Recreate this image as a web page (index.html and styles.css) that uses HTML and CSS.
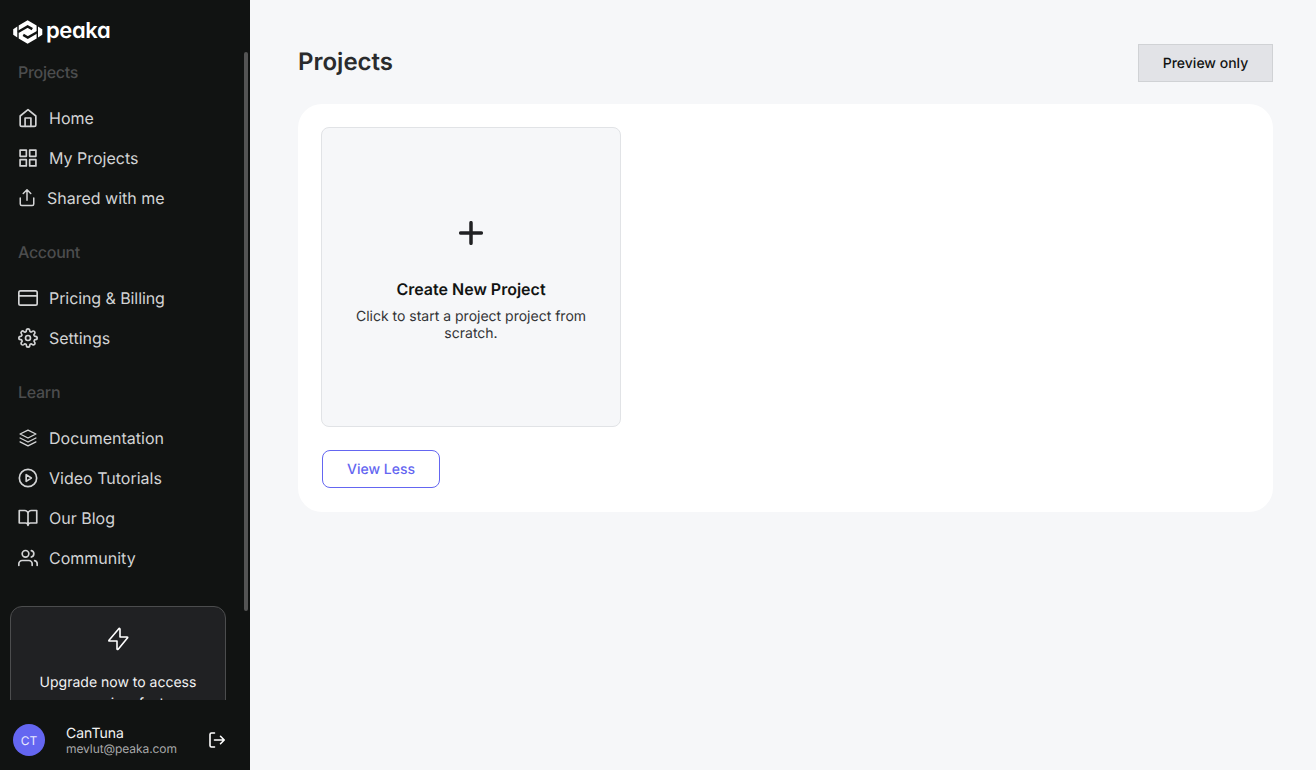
FILE: index.html
```html
<!DOCTYPE html>
<html lang="en">
<head>
<meta charset="utf-8">
<title>Peaka - Projects</title>
<link rel="stylesheet" href="styles.css">
</head>
<body>
<div class="app">
  <aside class="sidebar">
    <header class="brand">
      <svg class="brand-mark" width="30" height="24" viewBox="0 0 30 24">
        <path fill="#fff" d="M4.300 6.500V17.500L.2 14.800V9.200zM25 6.500V17.500L29.300 14.800V9.200zM14.600 .3L23.600 5.600V18.400L14.600 23.700L5.700 18.400V5.600z"/>
        <path stroke="#111312" stroke-width="2.500" d="M5 12L14.600 6.500L19.300 9.200M24.500 12L14.800 17.500L10.200 14.800"/>
      </svg>
      <span class="brand-name">peaka</span>
    </header>
    <div class="scroll">
      <nav class="menu">
        <h2 class="group">Projects</h2>
        <a class="item"><svg class="icon" viewBox="0 0 24 24"><path d="M2.600 9.600L12 2l9.400 7.600V20a2 2 0 0 1-2 2H4.600a2 2 0 0 1-2-2z"/><path d="M8.500 22V12h7v10"/></svg>Home</a>
        <a class="item"><svg class="icon" viewBox="0 0 24 24"><path d="M2.500 2.500h7.500v7.500H2.500zM14 2.500h7.500v7.500H14zM14 14h7.500v7.500H14zM2.500 14h7.500v7.500H2.500z"/></svg>My Projects</a>
        <a class="item"><svg class="icon icon-share" viewBox="0 0 24 24"><path d="M3 12v8a2 2 0 0 0 2 2h14a2 2 0 0 0 2-2v-8M17 6l-5-5-5 5M12 1v14"/></svg>Shared with me</a>
        <h2 class="group">Account</h2>
        <a class="item item-tight"><svg class="icon" viewBox="0 0 24 24"><rect x="1" y="3.500" width="22" height="17" rx="2"/><path d="M1 9.500h22"/></svg>Pricing &amp; Billing</a>
        <a class="item"><svg class="icon" viewBox="0 0 24 24"><circle cx="12" cy="12" r="3"/><path d="M19.400 15a1.650 1.650 0 0 0 .33 1.820l.06.06a2 2 0 1 1-2.830 2.830l-.06-.06a1.650 1.650 0 0 0-2.800 1.170V21a2 2 0 0 1-4 0v-.09A1.650 1.650 0 0 0 7.180 19.730l-.06.06a2 2 0 1 1-2.830-2.830l.06-.06A1.650 1.650 0 0 0 3.090 14H3a2 2 0 0 1 0-4h.09A1.650 1.650 0 0 0 4.270 7.180l-.06-.06a2 2 0 1 1 2.830-2.830l.06.06A1.650 1.650 0 0 0 10 3.090V3a2 2 0 0 1 4 0v.09a1.650 1.650 0 0 0 2.820 1.180l.06-.06a2 2 0 1 1 2.830 2.830l-.06.06A1.650 1.650 0 0 0 20.910 10H21a2 2 0 0 1 0 4h-.09a1.650 1.650 0 0 0-1.510 1z"/></svg>Settings</a>
        <h2 class="group">Learn</h2>
        <a class="item"><svg class="icon icon-thin" viewBox="0 0 24 24"><path d="M12 2.500L2.500 7.200 12 12l9.500-4.800zM2.500 12l9.500 4.800 9.500-4.800M2.500 16.600l9.500 4.800 9.500-4.800"/></svg>Documentation</a>
        <a class="item"><svg class="icon" viewBox="0 0 24 24"><circle cx="12" cy="12" r="10.400"/><path d="M9.800 8l6.200 4-6.200 4z"/></svg>Video Tutorials</a>
        <a class="item"><svg class="icon" viewBox="0 0 24 24"><path d="M1.500 3h6.500a4 4 0 0 1 4 4v14a3 3 0 0 0-3-3H1.500zM22.500 3H16a4 4 0 0 0-4 4v14a3 3 0 0 1 3-3h7.500z"/></svg>Our Blog</a>
        <a class="item"><svg class="icon" viewBox="0 0 24 24"><path d="M17 21v-2a4 4 0 0 0-4-4H5a4 4 0 0 0-4 4v2"/><circle cx="9" cy="7" r="4"/><path d="M23 21v-2a4 4 0 0 0-3-3.870M16 3.130a4 4 0 0 1 0 7.750"/></svg>Community</a>
      </nav>
      <section class="upgrade">
        <svg class="bolt" viewBox="0 0 24 24"><path d="M13 1.500L3 13.200q-.5.800.4.800H11v8q.3 1 1.200.2L21.600 10.800q.4-.8-.5-.8H14V2q-.3-.9-1-.5z"/></svg>
        <p class="upgrade-text">Upgrade now to access more premium features.</p>
      </section>
    </div>
    <div class="thumb"></div>
    <footer class="user">
      <div class="avatar">CT</div>
      <div class="who"><div class="who-name">CanTuna</div><div class="who-mail">mevlut@peaka.com</div></div>
      <svg class="logout" viewBox="0 0 18 18"><path d="M6.500 2H3.500Q2 2 2 3.500v11Q2 16 3.500 16h3M6.500 9H16M12.500 5.300L16.200 9l-3.700 3.700"/></svg>
    </footer>
  </aside>
  <main class="main">
    <div class="top">
      <h1 class="title">Projects</h1>
      <button class="preview">Preview only</button>
    </div>
    <section class="panel">
      <div class="create">
        <svg class="plus" viewBox="0 0 24 24"><path d="M12 1.700v20.600M1.700 12h20.600"/></svg>
        <h3 class="create-title">Create New Project</h3>
        <p class="create-text">Click to start a project project from scratch.</p>
      </div>
      <button class="less">View Less</button>
    </section>
  </main>
</div>
</body>
</html>
```
FILE: styles.css
```css
* { box-sizing: border-box; }
body { margin: 0; font-family: Inter, "Liberation Sans", sans-serif; background: #f6f7f9; text-rendering: geometricPrecision; }
h1, h2, h3, p { margin: 0; }
button { font-family: inherit; padding: 0; text-rendering: inherit; }
svg { flex: none; fill: none; stroke-linecap: round; stroke-linejoin: round; }

.app { display: flex; height: 770px; overflow: hidden; }

.sidebar { position: relative; display: flex; flex-direction: column; width: 250px; flex: none; background: #111312; }
.brand { display: flex; height: 52px; padding: 20px 0 0 13px; gap: 3px; }
.brand-mark { stroke-linecap: butt; stroke-linejoin: miter; }
.brand-name { color: #fff; font-size: 22px; font-weight: 600; line-height: 23px; letter-spacing: -0.4px; font-feature-settings: "cv11"; }

.scroll { height: 648px; overflow: hidden; }
.menu { display: flex; flex-direction: column; padding-left: 18px; }
.group { height: 40px; margin-bottom: 6px; font-size: 16px; font-weight: 500; line-height: 40px; letter-spacing: -0.3px; color: #4c4d4e; }
.item + .group { margin-top: 14px; }
.item { display: flex; align-items: center; gap: 11px; height: 40px; font-size: 16px; letter-spacing: 0; color: #d3d4d5; }
.item-tight { letter-spacing: -0.08px; }
.icon { width: 20px; height: 20px; stroke: #d3d4d5; stroke-width: 2; }
.icon-thin { stroke-width: 1.600; }
.icon-share { width: 18px; height: 18px; }

.upgrade { display: flex; flex-direction: column; align-items: center; width: 216px; height: 180px; margin: 28px 0 0 10px; padding: 20px 20px 0; border: 1px solid #4c4d4e; border-radius: 12px; background: #202123; }
.bolt { width: 24px; height: 24px; stroke: #fff; stroke-width: 1.600; }
.upgrade-text { margin-top: 21px; font-size: 14px; line-height: 21px; text-align: center; color: #f2f2f3; }

.thumb { position: absolute; left: 244px; top: 52px; width: 4px; height: 559px; border-radius: 2px; background: #545454; }

.user { display: flex; align-items: center; height: 70px; padding: 10px 24px 0 13px; }
.avatar { width: 32px; height: 32px; border-radius: 50%; background: #6466f1; color: #e8e8fd; font-size: 12px; line-height: 34px; text-align: center; }
.who { flex: 1; margin-left: 21px; }
.who-name { padding-top: 1px; font-size: 14px; line-height: 17px; color: #f2f2f3; }
.who-mail { font-size: 12px; line-height: 14px; letter-spacing: -0.08px; color: #a8a9aa; }
.logout { width: 18px; height: 18px; stroke: #fff; stroke-width: 1.600; }

.main { flex: 1; padding: 44px 43px 0 48px; }
.top { display: flex; justify-content: space-between; height: 60px; }
.title { font-size: 24px; font-weight: 600; line-height: 36px; color: #2a2b2d; }
.preview { width: 135px; height: 38px; border: 1px solid #d0d2d5; background: #e2e3e7; font-size: 14px; font-weight: 500; color: #111312; }
.panel { height: 408px; padding: 23px; border-radius: 24px; background: #fff; }
.create { display: flex; flex-direction: column; align-items: center; width: 300px; height: 300px; padding: 93px 30px 0; border: 1px solid #e1e3e6; border-radius: 8px; background: #f6f7f9; }
.plus { width: 24px; height: 24px; stroke: #202123; stroke-width: 3.500; }
.create-title { margin-top: 34px; font-size: 16px; font-weight: 600; line-height: 20px; color: #111312; }
.create-text { margin-top: 9px; font-size: 14px; line-height: 17px; text-align: center; color: #333436; }
.less { width: 118px; height: 38px; margin: 23px 0 0 1px; border: 1px solid #6466f1; border-radius: 8px; background: #fff; font-size: 14px; font-weight: 500; color: #6466f1; }
```
